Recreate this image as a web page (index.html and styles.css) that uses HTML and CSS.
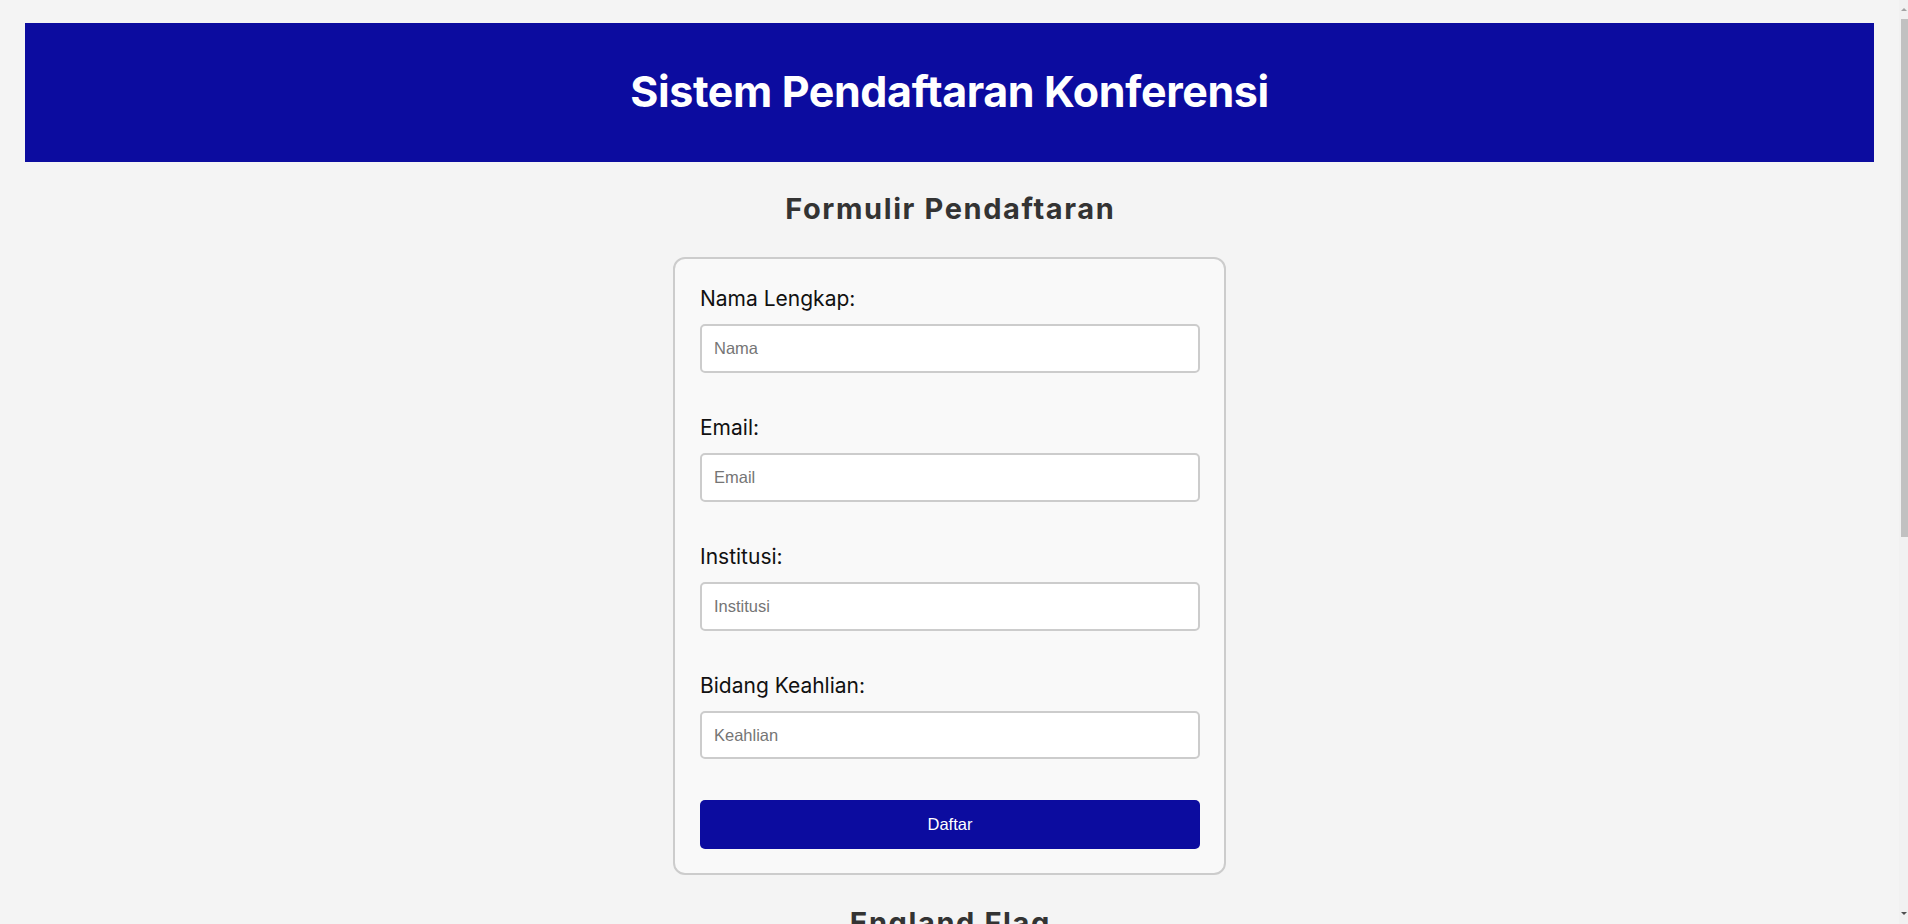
FILE: index.html
```html
<!DOCTYPE html>
<html lang="id">
<head>
<meta charset="utf-8">
<title>Sistem Pendaftaran Konferensi</title>
<link rel="stylesheet" href="styles.css">
</head>
<body>
<div class="page">
  <header class="site-header">
    <h1 class="site-title">Sistem Pendaftaran Konferensi</h1>
  </header>

  <main class="main">
    <h2 class="section-title">Formulir Pendaftaran</h2>
    <form class="card">
      <div class="field">
        <label class="field-label" for="nama">Nama Lengkap:</label>
        <input class="field-input" id="nama" type="text" placeholder="Nama">
      </div>
      <div class="field">
        <label class="field-label" for="email">Email:</label>
        <input class="field-input" id="email" type="email" placeholder="Email">
      </div>
      <div class="field">
        <label class="field-label" for="institusi">Institusi:</label>
        <input class="field-input" id="institusi" type="text" placeholder="Institusi">
      </div>
      <div class="field field--last">
        <label class="field-label" for="keahlian">Bidang Keahlian:</label>
        <input class="field-input" id="keahlian" type="text" placeholder="Keahlian">
      </div>
      <button class="submit" type="button">Daftar</button>
    </form>

    <h2 class="section-title section-title--flag">England Flag</h2>
  </main>
</div>

<div class="scrollbar">
  <span class="scroll-arrow scroll-arrow--up"></span>
  <span class="scroll-thumb"></span>
  <span class="scroll-arrow scroll-arrow--down"></span>
</div>
</body>
</html>
```

FILE: styles.css
```css
html, body {
  margin: 0;
  padding: 0;
  background: #f4f4f4;
}

body {
  font-family: "Inter", "Liberation Sans", sans-serif;
  color: #111;
  overflow: hidden;
}

.page {
  margin-right: 9px;
  padding-top: 23px;
}

/* Header */
.site-header {
  margin: 0 25px;
  padding: 42px 0 45px;
  background: #0c0c9f;
}

.site-title {
  margin: 0;
  text-align: center;
  color: #ffffff;
  font-size: 43px;
  line-height: 52px;
  font-weight: 700;
  letter-spacing: -0.4px;
}

/* Main */
.main {
  display: flex;
  flex-direction: column;
  align-items: center;
}

.section-title {
  margin: 29px 0 30px;
  padding-left: 1.6px;
  color: #333333;
  font-size: 29px;
  line-height: 36px;
  font-weight: 700;
  letter-spacing: 1.6px;
  text-align: center;
}

.section-title--flag {
  margin-top: 30px;
}

/* Card / form */
.card {
  box-sizing: border-box;
  width: 553px;
  padding: 28px 24px 24px 25px;
  background: #f9f9f9;
  border: 2px solid #cccccc;
  border-radius: 12px;
  display: flex;
  flex-direction: column;
}

.field {
  display: flex;
  flex-direction: column;
  margin-bottom: 43.4px;
}

.field--last {
  margin-bottom: 40.3px;
}

.field-label {
  font-size: 21px;
  line-height: 24px;
  font-weight: 400;
  color: #111111;
  margin-bottom: 13.2px;
}

.field-input {
  box-sizing: border-box;
  width: 100%;
  height: 48.4px;
  margin: 0;
  padding: 0 12px;
  border: 2px solid #cccccc;
  border-radius: 5px;
  background: #ffffff;
  font-family: "Liberation Sans", Arial, sans-serif;
  font-size: 16.5px;
  color: #222;
  outline: none;
}

.field-input::placeholder {
  color: #757575;
}

.submit {
  box-sizing: border-box;
  width: 100%;
  height: 49px;
  margin: 0;
  border: 0;
  border-radius: 5px;
  background: #0c0c9f;
  color: #ffffff;
  font-family: "Liberation Sans", Arial, sans-serif;
  font-size: 16.5px;
  cursor: pointer;
}

/* Scrollbar imitation on the right edge of the window */
.scrollbar {
  position: fixed;
  top: 0;
  right: 0;
  width: 9px;
  height: 100vh;
  background: #f1f1f1;
}

.scroll-thumb {
  position: absolute;
  top: 19px;
  right: 0;
  width: 7px;
  height: 518px;
  background: #c1c1c1;
}

.scroll-arrow {
  position: absolute;
  right: 1px;
  width: 0;
  height: 0;
  border-left: 3px solid transparent;
  border-right: 3px solid transparent;
}

.scroll-arrow--up {
  top: 8px;
  border-bottom: 3px solid #a3a3a3;
}

.scroll-arrow--down {
  bottom: 9px;
  border-top: 3px solid #505050;
}
```
